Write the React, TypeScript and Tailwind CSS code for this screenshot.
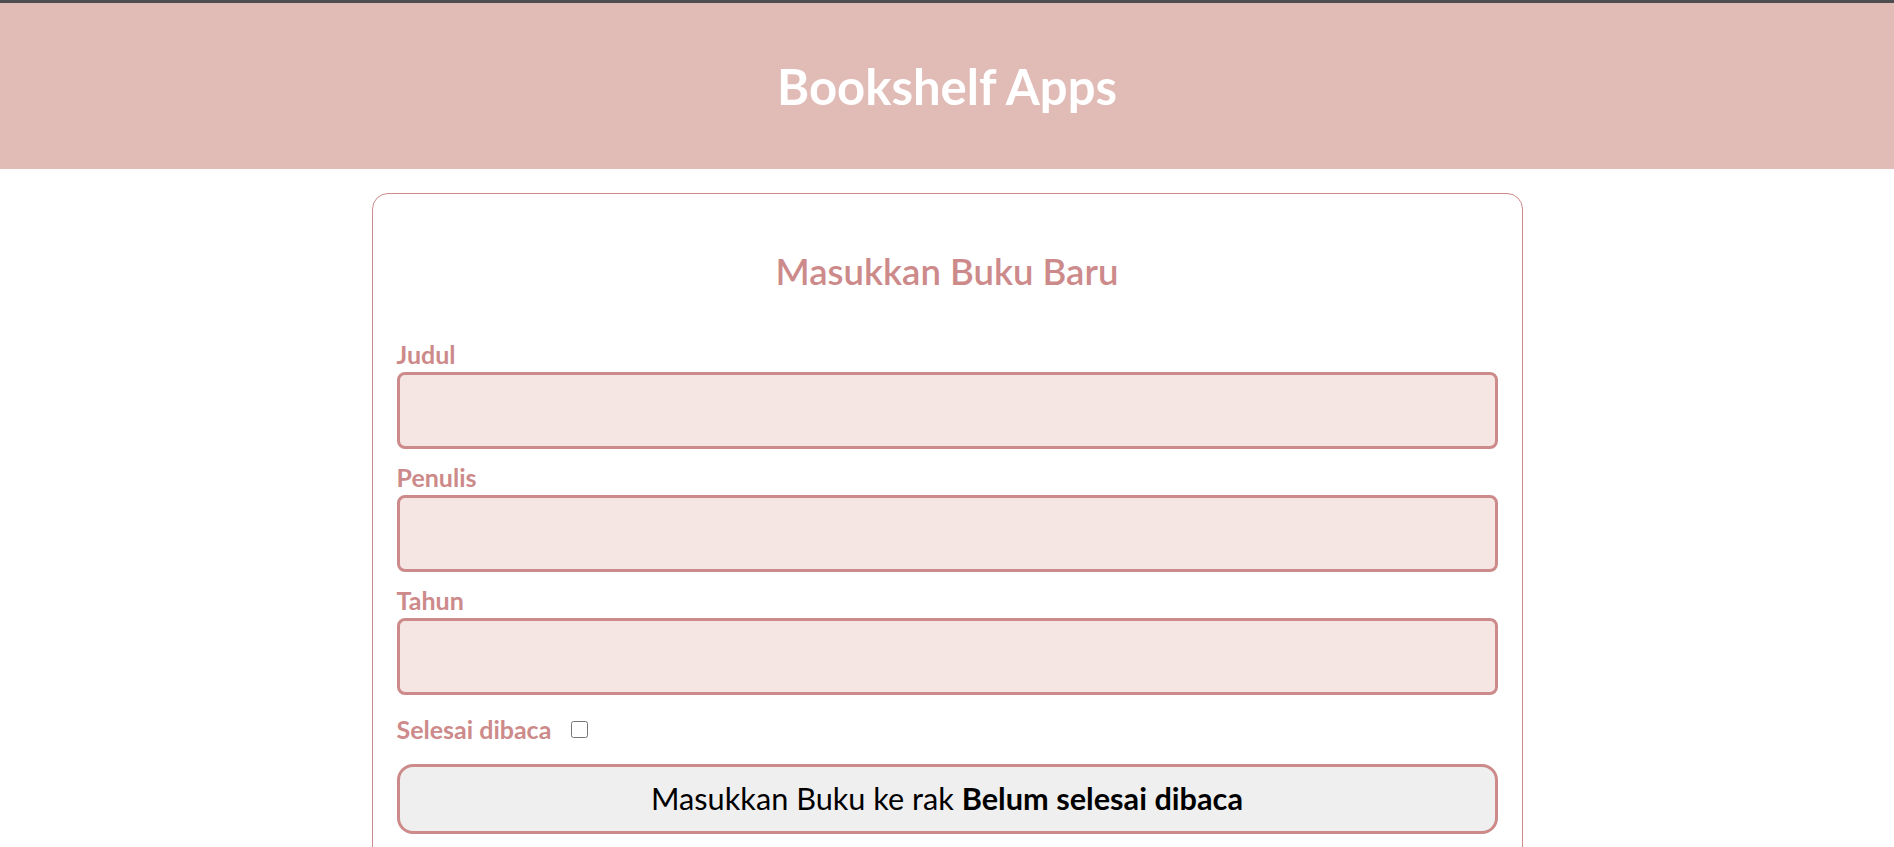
import React from "react";

const font = { fontFamily: "Lato, 'Noto Sans', 'Liberation Sans', sans-serif" };

function Field({ label, first }: { label: string; first?: boolean }) {
  return (
    <div className={first ? "flex flex-col" : "flex flex-col mt-[11px]"}>
      <label className="h-[35px] leading-[35px] text-[25px] font-bold text-[#cd8a8a]">{label}</label>
      <input
        type="text"
        className="h-[77px] w-full rounded-[8px] border-[3px] border-[#cd8a8a] bg-[#f5e6e4] px-3 text-[24px] outline-none"
      />
    </div>
  );
}

export default function App() {
  return (
    <div className="min-h-[847px] bg-white" style={font}>
      <div className="h-[3px] bg-[#4d4d50]" />
      <header className="flex h-[166px] items-center justify-center bg-[#e1bbb6]">
        <h1 className="text-[49px] font-bold leading-none text-white">Bookshelf Apps</h1>
      </header>
      <main className="flex justify-center pt-[24px]">
        <section className="w-[1151px] rounded-[16px] border border-[#cf8b8b] px-[24px] pt-[53px] pb-[40px]">
          <h2 className="h-[48px] text-center text-[36.5px] font-semibold leading-[48px] text-[#cd8a8a]">
            Masukkan Buku Baru
          </h2>
          <form className="mt-[42px] flex flex-col" onSubmit={(e) => e.preventDefault()}>
            <Field label="Judul" first />
            <Field label="Penulis" />
            <Field label="Tahun" />
            <div className="mt-[17px] flex h-[35px] items-center gap-[20px]">
              <label className="text-[25px] font-bold text-[#cd8a8a]">Selesai dibaca</label>
              <input type="checkbox" className="m-0 h-[17px] w-[17px]" />
            </div>
            <button
              type="submit"
              className="mt-[17px] h-[70px] w-full rounded-[16px] border-[3px] border-[#cd8a8a] bg-[#efefef] text-[30.7px] text-black"
            >
              Masukkan Buku ke rak <span className="font-bold">Belum selesai dibaca</span>
            </button>
          </form>
        </section>
      </main>
    </div>
  );
}
